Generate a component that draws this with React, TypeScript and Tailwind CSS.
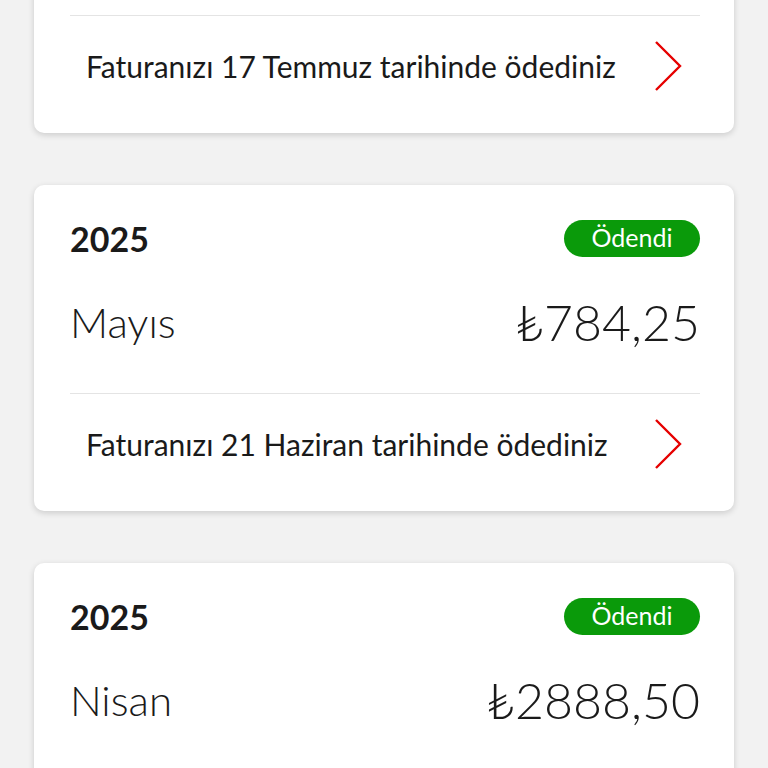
import React from 'react';

type Bill = {
  year: string;
  month: string;
  amount: string;
  paidOn: string;
};

const bills: Bill[] = [
  { year: '2025', month: 'Haziran', amount: '₺812,40', paidOn: 'Faturanızı 17 Temmuz tarihinde ödediniz' },
  { year: '2025', month: 'Mayıs', amount: '₺784,25', paidOn: 'Faturanızı 21 Haziran tarihinde ödediniz' },
  { year: '2025', month: 'Nisan', amount: '₺2888,50', paidOn: 'Faturanızı 20 Mayıs tarihinde ödediniz' },
];

const Chevron: React.FC = () => (
  <svg width="28" height="50" viewBox="0 0 28 50" fill="none" className="shrink-0">
    <polyline points="2,1 26,25 2,49" stroke="#e60000" strokeWidth={2.4} strokeLinejoin="miter" />
  </svg>
);

const BillCard: React.FC<{ bill: Bill }> = ({ bill }) => (
  <div className="bg-white rounded-[10px] shadow-[0_2px_6px_rgba(0,0,0,0.16)] pl-9 pr-[34px] pt-[35px] pb-[17px] h-[326px] shrink-0">
    {/* Year + status */}
    <div className="flex items-center justify-between h-[37px]">
      <span className="text-[34px] font-bold leading-none text-[#1a1a1a]">{bill.year}</span>
      <span className="h-[37px] w-[136px] rounded-full bg-[#0a9a0a] text-white text-[25px] leading-none flex items-center justify-center pb-[3px]">
        Ödendi
      </span>
    </div>

    {/* Month + amount */}
    <div className="flex items-center justify-between h-[60px] mt-[35px] mb-[41px] text-[#1a1a1a]">
      <span className="text-[42px] font-light leading-none">{bill.month}</span>
      <span className="text-[50px] font-light leading-none">{bill.amount}</span>
    </div>

    <div className="h-px bg-[#e4e4e4]" />

    {/* Payment info */}
    <div className="flex items-center justify-between h-[100px] pl-4 pr-[18px]">
      <span className="text-[30px] leading-none text-[#1a1a1a]">{bill.paidOn}</span>
      <Chevron />
    </div>
  </div>
);

const App: React.FC = () => {
  return (
    <div
      className="h-[768px] overflow-hidden bg-[#f2f2f2]"
      style={{ fontFamily: 'Lato, "Noto Sans", sans-serif' }}
    >
      {/* list is scrolled: first card starts above the viewport */}
      <div className="flex flex-col gap-[52px] px-[34px] -mt-[193px]">
        {bills.map((bill) => (
          <BillCard key={bill.month} bill={bill} />
        ))}
      </div>
    </div>
  );
};

export default App;
